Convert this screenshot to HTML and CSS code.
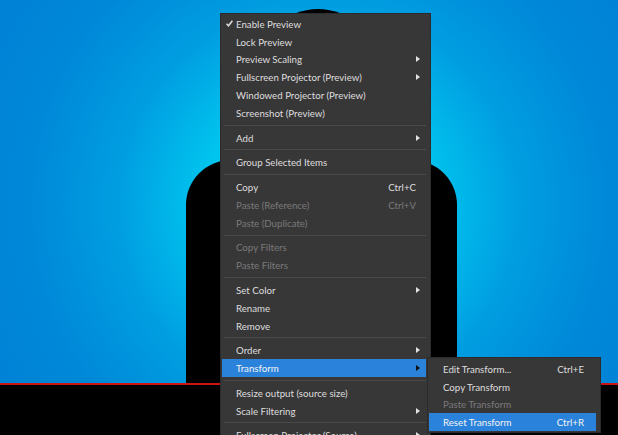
FILE: index.html
```html
<!DOCTYPE html>
<html>
<head>
<meta charset="utf-8">
<link rel="stylesheet" href="styles.css">
</head>
<body>
<div class="screen">
  <div class="stage">
    <div class="head"></div>
    <div class="torso"></div>
  </div>
  <div class="redline"></div>
  <div class="below"></div>

  <div class="menu main-menu">
    <div class="item"><span class="slot"><svg width="7" height="7" viewBox="0 0 7 7"><path d="M0.6 3.8 L2.5 5.8 L6.4 0.8" fill="none" stroke="#e0e0e0" stroke-width="1.5"/></svg></span><span class="label">Enable Preview</span></div>
    <div class="item"><span class="slot"></span><span class="label">Lock Preview</span></div>
    <div class="item"><span class="slot"></span><span class="label">Preview Scaling</span><span class="arrow"></span></div>
    <div class="item"><span class="slot"></span><span class="label">Fullscreen Projector (Preview)</span><span class="arrow"></span></div>
    <div class="item"><span class="slot"></span><span class="label">Windowed Projector (Preview)</span></div>
    <div class="item"><span class="slot"></span><span class="label">Screenshot (Preview)</span></div>
    <div class="sep"></div>
    <div class="item"><span class="slot"></span><span class="label">Add</span><span class="arrow"></span></div>
    <div class="sep"></div>
    <div class="item"><span class="slot"></span><span class="label">Group Selected Items</span></div>
    <div class="sep"></div>
    <div class="item"><span class="slot"></span><span class="label">Copy</span><span class="key">Ctrl+C</span></div>
    <div class="item disabled"><span class="slot"></span><span class="label">Paste (Reference)</span><span class="key">Ctrl+V</span></div>
    <div class="item disabled"><span class="slot"></span><span class="label">Paste (Duplicate)</span></div>
    <div class="sep"></div>
    <div class="item disabled"><span class="slot"></span><span class="label">Copy Filters</span></div>
    <div class="item disabled"><span class="slot"></span><span class="label">Paste Filters</span></div>
    <div class="sep"></div>
    <div class="item"><span class="slot"></span><span class="label">Set Color</span><span class="arrow"></span></div>
    <div class="item"><span class="slot"></span><span class="label">Rename</span></div>
    <div class="item"><span class="slot"></span><span class="label">Remove</span></div>
    <div class="sep"></div>
    <div class="item"><span class="slot"></span><span class="label">Order</span><span class="arrow"></span></div>
    <div class="item active"><span class="slot"></span><span class="label">Transform</span><span class="arrow dark"></span></div>
    <div class="sep"></div>
    <div class="item"><span class="slot"></span><span class="label">Resize output (source size)</span></div>
    <div class="item"><span class="slot"></span><span class="label">Scale Filtering</span><span class="arrow"></span></div>
    <div class="sep"></div>
    <div class="item"><span class="slot"></span><span class="label">Fullscreen Projector (Source)</span><span class="arrow"></span></div>
    <div class="item"><span class="slot"></span><span class="label">Windowed Projector (Source)</span></div>
  </div>

  <div class="menu sub-menu">
    <div class="item"><span class="slot"></span><span class="label">Edit Transform...</span><span class="key">Ctrl+E</span></div>
    <div class="item"><span class="slot"></span><span class="label">Copy Transform</span></div>
    <div class="item disabled"><span class="slot"></span><span class="label">Paste Transform</span></div>
    <div class="item active"><span class="slot"></span><span class="label">Reset Transform</span><span class="key">Ctrl+R</span></div>
  </div>
</div>
</body>
</html>
```
FILE: styles.css
```css
html, body {
  margin: 0;
  padding: 0;
  background: #000;
}
.screen {
  position: relative;
  width: 618px;
  height: 435px;
  overflow: hidden;
  display: flex;
  flex-direction: column;
  font-family: Lato, "Noto Sans", sans-serif;
  font-size: 9.7px;
}
.stage {
  position: relative;
  height: 383px;
  flex: none;
  overflow: hidden;
  background: radial-gradient(circle at 318px 205px, #00d8f8 0px, #00c4ee 115px, #009ee1 200px, #0088d8 290px, #0080d5 400px);
}
.head {
  position: absolute;
  left: 258px;
  top: 9px;
  width: 120px;
  height: 120px;
  border-radius: 50%;
  background: #000;
}
.torso {
  position: absolute;
  left: 186px;
  top: 160px;
  width: 271px;
  height: 240px;
  border-radius: 45px 45px 0 0;
  background: #000;
}
.redline {
  height: 2px;
  flex: none;
  background: #cc1414;
}
.below {
  flex: 1;
  background: #000;
}
.menu {
  position: absolute;
  box-sizing: border-box;
  background: #383738;
  border: 1px solid #2b2b2b;
  color: #dedede;
  display: flex;
  flex-direction: column;
}
.main-menu {
  left: 220px;
  top: 13px;
  width: 211px;
  padding: 1px 4px 0 1px;
}
.sub-menu {
  left: 427px;
  top: 357px;
  width: 174px;
  padding: 2px 4px 1px 1px;
}
.item {
  height: 17.8px;
  flex: none;
  display: flex;
  align-items: center;
  padding: 0 10px 0 4px;
  white-space: nowrap;
}
.sub-menu .item {
  height: 17.7px;
  padding-right: 12px;
}
.slot {
  width: 10px;
  flex: none;
  display: flex;
  align-items: center;
}
.label {
  flex: 1;
}
.key {
  flex: none;
}
.disabled {
  color: #7a797a;
}
.active {
  background: #2a82da;
  color: #f4f4f4;
}
.arrow {
  flex: none;
  width: 0;
  height: 0;
  margin-right: -4px;
  border-left: 4px solid #e0e0e0;
  border-top: 3.5px solid transparent;
  border-bottom: 3.5px solid transparent;
}
.arrow.dark {
  border-left-color: #101010;
}
.sep {
  height: 1px;
  flex: none;
  margin: 2.97px 0 2.97px 2px;
  background: #4a494a;
}
```
